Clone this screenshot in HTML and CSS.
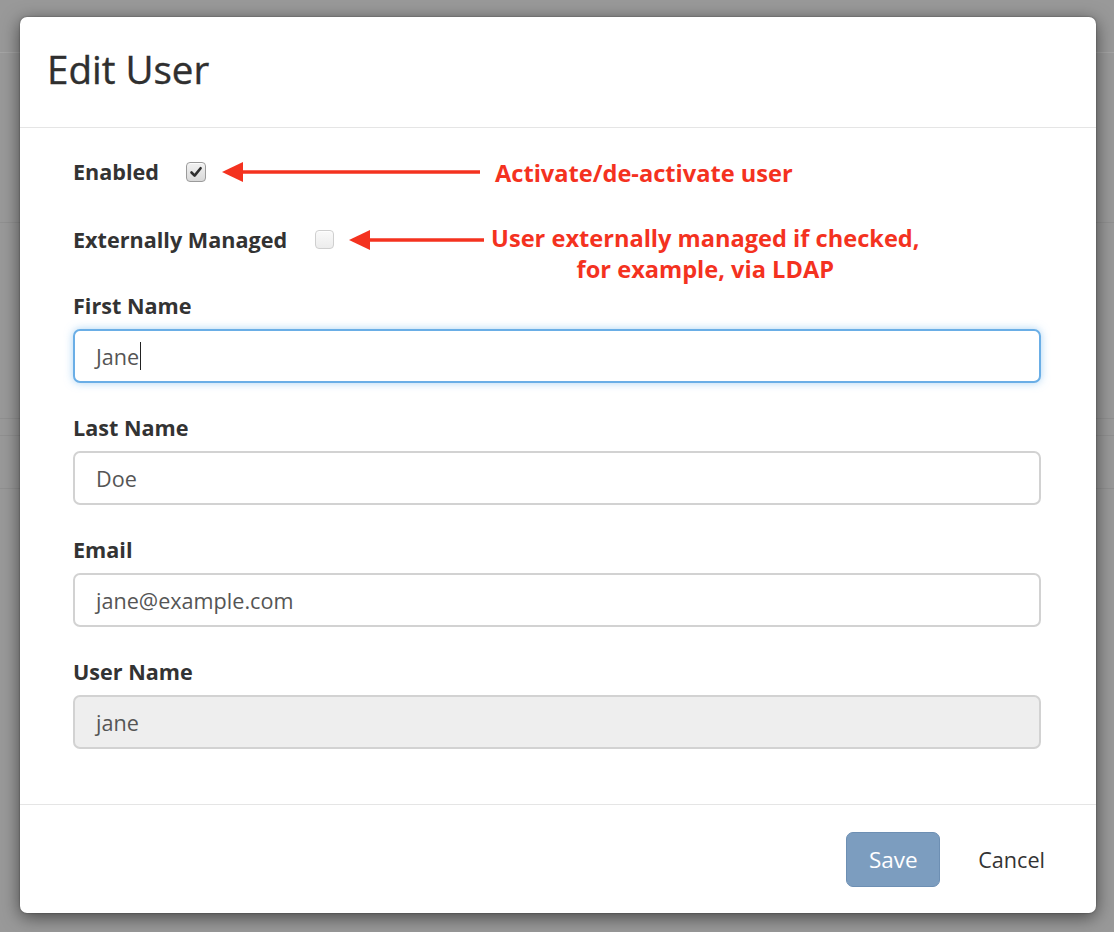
FILE: index.html
```html
<!DOCTYPE html>
<html lang="en">
<head>
<meta charset="utf-8">
<title>Edit User</title>
<link rel="stylesheet" href="styles.css">
</head>
<body>
<div class="backdrop">
  <div class="modal">
    <div class="modal-header">
      <h1 class="modal-title">Edit User</h1>
    </div>
    <div class="modal-body">
      <div class="check-row">
        <span class="label">Enabled</span>
        <span class="checkbox checked">
          <svg viewBox="0 0 20 20" width="20" height="20"><path d="M5.5 10.5 L8.6 13.6 L14.6 6.2" fill="none" stroke="#2e2e2e" stroke-width="2.6" stroke-linecap="round" stroke-linejoin="round"/></svg>
        </span>
        <svg class="arrow arrow-long" viewBox="0 0 258 22" width="258" height="22"><path d="M18 11 H258" stroke="#f4321f" stroke-width="3.4"/><path d="M0 11 L21 1 L21 21 Z" fill="#f4321f"/></svg>
        <span class="note">Activate/de-activate user</span>
      </div>
      <div class="check-row second">
        <span class="label">Externally Managed</span>
        <span class="checkbox"></span>
        <svg class="arrow arrow-short" viewBox="0 0 135 22" width="135" height="22"><path d="M18 11 H135" stroke="#f4321f" stroke-width="3.4"/><path d="M0 11 L21 1 L21 21 Z" fill="#f4321f"/></svg>
        <span class="note note-multi">User externally managed if checked,<br>for example, via LDAP</span>
      </div>

      <div class="form-group first">
        <div class="label">First Name</div>
        <div class="form-control focused">Jane<span class="caret"></span></div>
      </div>
      <div class="form-group">
        <div class="label">Last Name</div>
        <div class="form-control">Doe</div>
      </div>
      <div class="form-group">
        <div class="label">Email</div>
        <div class="form-control">jane@example.com</div>
      </div>
      <div class="form-group last">
        <div class="label">User Name</div>
        <div class="form-control disabled">jane</div>
      </div>
    </div>
    <div class="modal-footer">
      <button class="btn btn-save" type="button">Save</button>
      <button class="btn btn-link" type="button">Cancel</button>
    </div>
  </div>
</div>
</body>
</html>
```
FILE: styles.css
```css
* { box-sizing: border-box; }

html, body {
  margin: 0;
  padding: 0;
  width: 1114px;
  height: 932px;
  overflow: hidden;
}

body {
  font-family: "Open Sans", "Noto Sans", "Liberation Sans", sans-serif;
  color: #333;
  background-color: #999;
  background-image:
    linear-gradient(to bottom, transparent 52px, rgba(255,255,255,0.12) 52px, rgba(255,255,255,0.12) 53px, transparent 53px),
    linear-gradient(to bottom, transparent 222px, rgba(0,0,0,0.06) 222px, rgba(0,0,0,0.06) 223px, transparent 223px),
    linear-gradient(to bottom, transparent 418px, rgba(0,0,0,0.06) 418px, rgba(0,0,0,0.06) 419px, transparent 419px),
    linear-gradient(to bottom, transparent 435px, rgba(0,0,0,0.06) 435px, rgba(0,0,0,0.06) 436px, transparent 436px),
    linear-gradient(to bottom, transparent 488px, rgba(0,0,0,0.06) 488px, rgba(0,0,0,0.06) 489px, transparent 489px);
}

.backdrop {
  padding: 17px 18px 0 20px;
}

.modal {
  width: 1076px;
  height: 896px;
  background: #fff;
  border-radius: 7px;
  box-shadow: 0 4px 18px rgba(0, 0, 0, 0.55), 0 0 2px rgba(0,0,0,0.4);
  display: flex;
  flex-direction: column;
}

.modal-header {
  height: 111px;
  border-bottom: 1px solid #e5e5e5;
  padding: 0 27px;
  display: flex;
  align-items: center;
}

.modal-title {
  margin: 0;
  font-size: 38.5px;
  font-weight: 400;
  line-height: 1;
  color: #2f2f2f;
  -webkit-text-stroke: 0.4px #2f2f2f;
  position: relative;
  top: -3px;
}

.modal-body {
  flex: 1;
  padding: 29px 55px 0 53px;
  border-bottom: 1px solid #e5e5e5;
}

.label {
  font-size: 21.6px;
  font-weight: 700;
  line-height: 30px;
  color: #333;
}

.check-row {
  display: flex;
  align-items: flex-start;
  height: 30px;
}

.check-row.second {
  margin-top: 38px;
}

.checkbox {
  width: 20px;
  height: 20px;
  margin-top: 5px;
  margin-left: 27px;
  border: 1px solid #b9b9b9;
  border-radius: 4px;
  background: linear-gradient(to bottom, #fbfbfb, #e6e6e6);
  box-shadow: inset 0 1px 0 rgba(255,255,255,0.8);
  display: flex;
  align-items: center;
  justify-content: center;
  flex: none;
}

.checkbox svg {
  display: block;
  margin: -1px;
}

.checkbox.checked {
  border-color: #9b9b9b;
  background: linear-gradient(to bottom, #f2f2f2, #d9d9d9);
}

.second .checkbox {
  width: 19px;
  height: 19px;
  margin-left: 28px;
  border-color: #cfcfcf;
  background: linear-gradient(to bottom, #fafafa, #ececec);
}

.arrow {
  display: block;
  flex: none;
  margin-top: 4px;
}

.arrow-long { margin-left: 16px; }
.arrow-short { margin-left: 15px; }

.note {
  color: #f4321f;
  font-size: 23.6px;
  font-weight: 700;
  line-height: 31px;
  white-space: nowrap;
  margin-top: 1px;
}

.arrow-long + .note { margin-left: 15px; }

.note-multi {
  margin-left: 7px;
  text-align: center;
  margin-top: -2px;
}

.form-group {
  margin-top: 30px;
}

.form-group.first {
  margin-top: 36px;
}

.form-group .label {
  margin-bottom: 8px;
}

.form-control {
  height: 54px;
  width: 968px;
  border: 2px solid #d2d2d2;
  border-radius: 7px;
  padding: 0 21px;
  display: flex;
  align-items: center;
  font-size: 21.6px;
  color: #555;
  background: #fff;
}

.form-control.focused {
  border-color: #6aaee6;
  box-shadow: 0 0 9px rgba(102, 175, 233, 0.55);
}

.form-control.disabled {
  background: #eeeeee;
}

.caret {
  display: inline-block;
  width: 0;
  height: 28px;
  border-left: 1.5px solid #222;
  margin-left: 1px;
}

.modal-footer {
  height: 108px;
  padding: 27px 50px 0 0;
  display: flex;
  justify-content: flex-end;
  align-items: flex-start;
}

.btn {
  font-family: inherit;
  font-size: 22.5px;
  font-weight: 400;
  height: 55px;
  border-radius: 7px;
  cursor: pointer;
}

.btn-save {
  width: 94px;
  background: #7c9dbf;
  border: 1px solid #6d8fb3;
  color: #fff;
  padding: 0;
}

.btn-link {
  background: none;
  border: 1px solid transparent;
  color: #333;
  padding: 0;
  margin-left: 37px;
  font-size: 21.6px;
}
```
